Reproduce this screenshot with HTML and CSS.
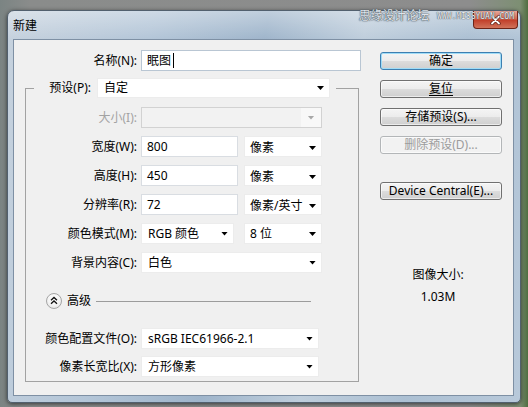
FILE: index.html
```html
<!DOCTYPE html>
<html lang="zh-CN">
<head>
<meta charset="utf-8">
<title>新建</title>
<link rel="stylesheet" href="styles.css">
</head>
<body>
<div class="window">
  <div class="watermark"><span class="wm-cn">思缘设计论坛</span><span class="wm-en">WWW.MISSYUAN.COM</span></div>
  <div class="titlebar">
    <span class="title">新建</span>
    <span class="close" aria-label="关闭">
      <svg width="11" height="10" viewBox="0 0 11 10"><path d="M2 1.5 L9 8.5 M9 1.5 L2 8.5" stroke="#5a1a10" stroke-width="3.2" stroke-linecap="round"/><path d="M2 1.5 L9 8.5 M9 1.5 L2 8.5" stroke="#fff" stroke-width="1.8" stroke-linecap="round"/></svg>
    </span>
  </div>
  <div class="client">
    <div class="form-col">
      <div class="row name-row">
        <span class="lbl lbl-name">名称(N):</span>
        <div class="input name-input"><span>眠图</span><span class="caret"></span></div>
      </div>
      <fieldset class="group">
        <legend class="preset">
          <span class="lbl-preset">预设(P):</span>
          <div class="select w-preset"><span>自定</span></div>
        </legend>
        <div class="rows">
          <div class="row"><span class="lbl lbl-disabled">大小(I):</span><div class="select select-disabled w-full"><span class="dd-btn"></span></div></div>
          <div class="row"><span class="lbl">宽度(W):</span><div class="input w-num">800</div><div class="select w-unit"><span>像素</span></div></div>
          <div class="row"><span class="lbl">高度(H):</span><div class="input w-num">450</div><div class="select w-unit"><span>像素</span></div></div>
          <div class="row"><span class="lbl">分辨率(R):</span><div class="input w-num">72</div><div class="select w-unit"><span>像素/英寸</span></div></div>
          <div class="row"><span class="lbl">颜色模式(M):</span><div class="select w-mode"><span>RGB 颜色</span></div><div class="select w-unit w-bit"><span>8 位</span></div></div>
          <div class="row"><span class="lbl">背景内容(C):</span><div class="select w-full"><span>白色</span></div></div>
        </div>
        <div class="advanced">
          <span class="adv-btn">
            <svg width="16" height="16" viewBox="0 0 16 16"><path d="M5 7.2 L8 4.4 L11 7.2 M5 10.8 L8 8 L11 10.8" fill="none" stroke="#111" stroke-width="1.3"/></svg>
          </span>
          <span class="adv-text">高级</span>
          <span class="adv-line"></span>
        </div>
        <div class="rows rows-tight">
          <div class="row"><span class="lbl">颜色配置文件(O):</span><div class="select w-wide"><span>sRGB IEC61966-2.1</span></div></div>
          <div class="row"><span class="lbl">像素长宽比(X):</span><div class="select w-wide"><span>方形像素</span></div></div>
        </div>
      </fieldset>
    </div>
    <div class="btn-col">
      <div class="btn btn-default">确定</div>
      <div class="btn"><span class="ul">复位</span></div>
      <div class="btn">存储预设(S)...</div>
      <div class="btn btn-disabled">删除预设(D)...</div>
      <div class="btn btn-device">Device Central(E)...</div>
      <div class="info">
        <div>图像大小:</div>
        <div>1.03M</div>
      </div>
    </div>
  </div>
</div>
</body>
</html>
```
FILE: styles.css
```css
html, body {
  margin: 0;
  height: 100%;
}
body {
  box-sizing: border-box;
  padding-top: 10px;
  overflow: hidden;
  background: linear-gradient(to right, #7b8483 0px, #8a8c8b 30px, #8d8d8d 470px, #7d8f73 520px, #4f6d40 528px);
  font-family: "Noto Sans", "Noto Sans CJK SC", sans-serif;
  font-size: 12px;
  line-height: 16px;
  color: #000;
}
.window {
  position: relative;
  margin-left: 7px;
  width: 514px;
  height: 393px;
  box-sizing: border-box;
  border: 1px solid #52606e;
  border-radius: 7px 7px 5px 5px;
  display: flex;
  flex-direction: column;
  background:
    linear-gradient(to bottom, rgba(255,255,255,0.35), rgba(255,255,255,0) 28px),
    linear-gradient(100deg, #c6d2de 0%, #b4c6d8 25%, #9fb5cb 45%, #bfcedc 62%, #acc0d3 80%, #b8c9da 100%);
  box-shadow: 0 1px 4px rgba(0,0,0,0.6);
}
.watermark {
  position: absolute;
  top: -5px;
  right: 6px;
  display: flex;
  align-items: center;
  gap: 8px;
  z-index: 2;
  pointer-events: none;
}
.wm-cn {
  font-size: 12px;
  color: #dfe4ea;
  text-shadow: 0 0 1px #4a525b, 0 0 1px #4a525b, 0 0 2px #6a737c;
  letter-spacing: -0.3px;
}
.wm-en {
  font-family: "DejaVu Sans Mono", monospace;
  font-size: 8px;
  color: #eef0f2;
  margin-top: 3px;
  text-shadow: 0 0 1px #3d444b, 0 0 1px #3d444b;
}
.titlebar {
  height: 28px;
  display: flex;
  align-items: center;
  flex: none;
}
.title {
  padding-left: 5px;
  padding-top: 1px;
}
.close {
  margin-left: auto;
  margin-right: 2px;
  align-self: flex-start;
  width: 45px;
  height: 18px;
  box-sizing: border-box;
  border: 1px solid #6d2418;
  border-top: none;
  border-radius: 0 0 4px 4px;
  background: linear-gradient(to bottom, #e7a79a 0%, #d26b55 45%, #c2412c 55%, #d0725a 100%);
  display: flex;
  align-items: center;
  justify-content: center;
}
.close svg { display: block; }
.client {
  flex: 1;
  margin: 0 6px 6px 5px;
  border: 1px solid #7e90a4;
  background: #f0f0f0;
  display: flex;
}
.form-col {
  width: 336px;
  padding: 10px 0 0 11px;
  flex: none;
}
.row {
  display: flex;
  align-items: center;
  height: 21px;
}
.lbl {
  width: 111px;
  text-align: right;
  white-space: nowrap;
  flex: none;
}
.lbl-name { width: 112px; }
.lbl-disabled { color: #a3a3a3; }
.input {
  box-sizing: border-box;
  height: 21px;
  margin-left: 4px;
  padding-left: 5px;
  background: #fff;
  border: 1px solid #d9dde2;
  display: flex;
  align-items: center;
  flex: none;
}
.name-input {
  width: 220px;
  border-color: #b9c6d3;
  padding-left: 5px;
}
.caret {
  width: 1px;
  height: 15px;
  background: #000;
  margin-left: 2px;
}
.w-num { width: 97px; }
.select {
  box-sizing: border-box;
  height: 21px;
  margin-left: 4px;
  padding: 0 5px 0 6px;
  background: #fff;
  border: 1px solid #ececec;
  display: flex;
  align-items: center;
  flex: none;
  white-space: nowrap;
}
.select::after {
  content: "";
  margin-left: auto;
  width: 7px;
  height: 4px;
  background: #000;
  clip-path: polygon(0 0, 100% 0, 50% 100%);
  flex: none;
}
.w-full { width: 181px; }
.w-unit { width: 78px; margin-left: 6px; padding-left: 5px; padding-top: 3px; }
.w-mode { width: 93px; }
.w-bit { margin-left: 10px; padding-top: 1px; }
.w-wide { width: 178px; }
.w-preset { width: 233px; height: 20px; margin-left: 6px; }
.select-disabled {
  background: #f2f2f2;
  border-color: #d2d2d2;
  padding: 0;
}
.select-disabled::after { display: none; }
.dd-btn {
  margin-left: auto;
  width: 20px;
  height: 100%;
  background: #f8f8f8;
  display: flex;
  align-items: center;
  justify-content: center;
}
.dd-btn::after {
  content: "";
  width: 7px;
  height: 4px;
  background: #a8a8a8;
  clip-path: polygon(0 0, 100% 0, 50% 100%);
}
.group {
  margin: 7px 0 0 0;
  width: 334px;
  box-sizing: border-box;
  border: 1px solid #a2a2a2;
  padding: 9px 0 4px 0;
  min-inline-size: 0;
}
.preset {
  display: flex;
  align-items: center;
  height: 20px;
  margin-left: 8px;
  padding: 0 6px 0 0;
}
.lbl-preset {
  width: 57px;
  text-align: right;
  white-space: nowrap;
}
.rows {
  display: flex;
  flex-direction: column;
  gap: 8px;
}
.rows-tight { gap: 7px; }
.advanced {
  display: flex;
  align-items: center;
  height: 16px;
  margin: 20px 0 19px 0;
}
.adv-btn {
  margin-left: 20px;
  width: 16px;
  height: 16px;
  box-sizing: border-box;
  border: 1px solid #a5a5a5;
  border-radius: 50%;
  background: radial-gradient(circle at 50% 35%, #ffffff 0%, #f3f3f3 55%, #dcdcdc 100%);
  display: flex;
  align-items: center;
  justify-content: center;
}
.adv-btn svg { display: block; margin: -1px; }
.adv-text { margin-left: 5px; }
.adv-line {
  flex: 1;
  height: 1px;
  background: #9c9c9c;
  margin: 1px 47px 0 5px;
}
.btn-col {
  margin-left: 19px;
  padding-top: 12px;
  width: 122px;
  display: flex;
  flex-direction: column;
  gap: 10px;
}
.btn {
  height: 18px;
  box-sizing: border-box;
  border: 1px solid #707070;
  border-radius: 3px;
  background: linear-gradient(to bottom, #f4f4f4 0%, #ececec 48%, #dcdcdc 52%, #cfcfcf 100%);
  display: flex;
  align-items: center;
  justify-content: center;
  white-space: nowrap;
  box-shadow: inset 0 0 0 1px rgba(255,255,255,0.6);
}
.btn-default {
  border-color: #3c7fb1;
  box-shadow: inset 0 0 0 1px #9fdcf7;
}
.btn-disabled {
  color: #9c9c9c;
  border-color: #b3b6b8;
  background: #f2f2f2;
}
.btn-device { margin-top: 18px; }
.ul {
  text-decoration: underline;
  text-underline-offset: 2px;
}
.info {
  margin-top: 57px;
  padding-right: 6px;
  display: flex;
  flex-direction: column;
  align-items: center;
  gap: 6px;
}
```
